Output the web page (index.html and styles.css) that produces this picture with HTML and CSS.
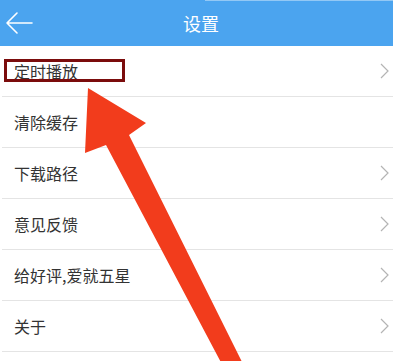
FILE: index.html
```html
<!DOCTYPE html>
<html lang="zh-CN">
<head>
    <meta charset="UTF-8">
    <meta name="viewport" content="width=device-width, initial-scale=1.0">
    <title>设置</title>
    <link rel="stylesheet" href="styles.css">
</head>
<body>
    <div class="header">
        <svg class="back" width="28" height="24" viewBox="0 0 28 24">
            <path d="M27 12 H2 M12 2 L2 12 L12 22" fill="none" stroke="#fff" stroke-width="1.6" stroke-linecap="round" stroke-linejoin="round"/>
        </svg>
        <div class="title">设置</div>
    </div>

    <ul class="menu">
        <li class="menu-item">
            <span class="label">定时播放</span>
            <svg class="chevron" width="9" height="16" viewBox="0 0 9 16"><path d="M1 1 L8 8 L1 15" fill="none" stroke="#b4b4b4" stroke-width="1.2"/></svg>
        </li>
        <li class="menu-item">
            <span class="label">清除缓存</span>
        </li>
        <li class="menu-item">
            <span class="label">下载路径</span>
            <svg class="chevron" width="9" height="16" viewBox="0 0 9 16"><path d="M1 1 L8 8 L1 15" fill="none" stroke="#b4b4b4" stroke-width="1.2"/></svg>
        </li>
        <li class="menu-item">
            <span class="label">意见反馈</span>
            <svg class="chevron" width="9" height="16" viewBox="0 0 9 16"><path d="M1 1 L8 8 L1 15" fill="none" stroke="#b4b4b4" stroke-width="1.2"/></svg>
        </li>
        <li class="menu-item">
            <span class="label">给好评,爱就五星</span>
            <svg class="chevron" width="9" height="16" viewBox="0 0 9 16"><path d="M1 1 L8 8 L1 15" fill="none" stroke="#b4b4b4" stroke-width="1.2"/></svg>
        </li>
        <li class="menu-item">
            <span class="label">关于</span>
            <svg class="chevron" width="9" height="16" viewBox="0 0 9 16"><path d="M1 1 L8 8 L1 15" fill="none" stroke="#b4b4b4" stroke-width="1.2"/></svg>
        </li>
    </ul>

    <!-- annotation overlays -->
    <div class="highlight"></div>
    <svg class="pointer" width="393" height="361" viewBox="0 0 393 361">
        <polygon points="88,88 146,123 129,135 246,370 225,370 106,145 85,153" fill="#f23c1c"/>
    </svg>
</body>
</html>
```

FILE: styles.css
```css
* {
    margin: 0;
    padding: 0;
    box-sizing: border-box;
    font-family: "Noto Sans CJK SC", "Noto Sans", sans-serif;
}

body {
    width: 393px;
    height: 361px;
    overflow: hidden;
    background: #fff;
    position: relative;
    color: #333;
}

.header {
    height: 46px;
    display: flex;
    align-items: center;
    position: relative;
    background: linear-gradient(#93c8f5, #93c8f5) right top / 188px 1px no-repeat, #4ba4ef;
}

.back {
    margin-left: 5px;
    flex-shrink: 0;
}

.title {
    position: absolute;
    left: 0;
    right: 0;
    text-align: center;
    padding-left: 9px;
    font-size: 18px;
    color: #fff;
    pointer-events: none;
}

.menu {
    list-style: none;
}

.menu-item {
    height: 51px;
    display: flex;
    align-items: center;
    justify-content: space-between;
    padding: 0 4px 0 14px;
    border-bottom: 1px solid #e4e4e4;
    margin-left: 2px;
    padding-left: 12px;
}

.label {
    font-size: 16px;
    color: #333;
}

.chevron {
    margin-right: 0;
}

.highlight {
    position: absolute;
    left: 4px;
    top: 59px;
    width: 121px;
    height: 23px;
    border: 3px solid #7b0c0c;
}

.pointer {
    position: absolute;
    left: 0;
    top: 0;
}
```
